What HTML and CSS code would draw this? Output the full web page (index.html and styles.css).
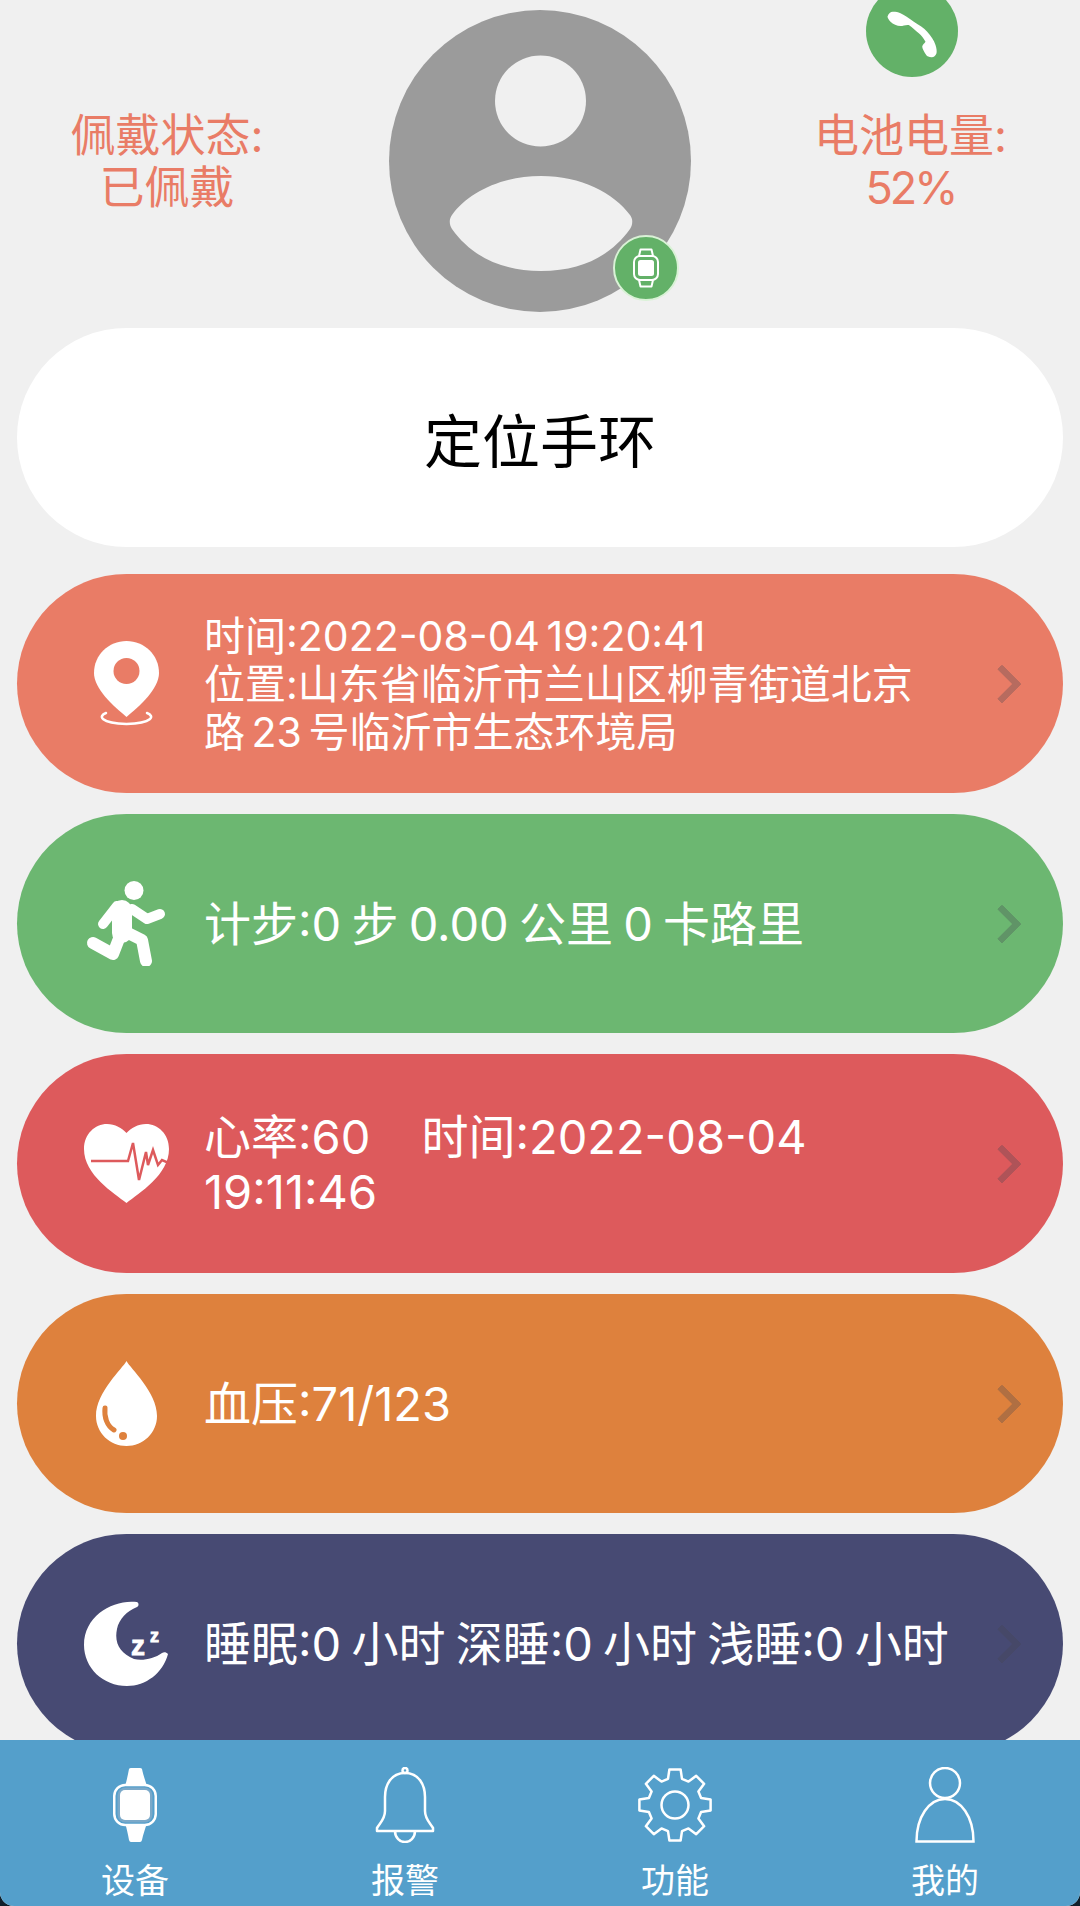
FILE: index.html
```html
<!DOCTYPE html>
<html lang="zh-CN">
<head>
    <meta charset="utf-8">
    <title>设备</title>
    <link rel="stylesheet" href="styles.css">
</head>
<body>
    <div class="page">
        <main class="main">
            <div class="header">
                <div class="status">佩戴状态:<br>已佩戴</div>
                <div class="avatar">
                    <svg class="avatar-img" viewBox="0 0 302 302">
                        <circle cx="151" cy="151" r="151" fill="#9b9b9b"/>
                        <circle cx="151.5" cy="91" r="45.5" fill="#f0f0f0"/>
                        <path d="M63 205 C79 183 112 166 152 166 C192 166 225 183 241 205 C244 209 244 214 241 219 C223 244 195 261 152 261 C109 261 81 244 63 219 C60 214 60 209 63 205Z" fill="#f0f0f0"/>
                    </svg>
                    <div class="badge">
                        <svg viewBox="0 0 62 62" width="62" height="62">
                            <path d="M24 19 L25.500 12.500 H36.500 L38 19 M24 43 L25.500 49.500 H36.500 L38 43" fill="none" stroke="#fff" stroke-width="2" stroke-linejoin="round"/>
                            <rect x="19" y="19" width="24" height="24" rx="6" fill="none" stroke="#fff" stroke-width="2"/>
                            <rect x="23" y="23" width="16" height="16" rx="2.500" fill="#fff"/>
                        </svg>
                    </div>
                </div>
                <div class="status status-right">电池电量:<br><span class="status-num">52%</span></div>
                <div class="call">
                    <svg viewBox="0 0 92 92" width="92" height="92">
                        <path d="M21.500 31.500 C22.500 28 25 26.500 27 26.700 C30 26.800 32 27 34.500 28.300 C39 30.500 43 33.500 47.800 36.700 C53 40 58 43 61.200 46.700 C65 51 68 55 69.500 60 C70.500 63 71 66 70.500 68.300 C69.500 71 67.500 72.500 65.500 72.300 C63 72 61 71.500 60.200 70 C58.500 67 56.500 64.500 56.200 61.700 C56.500 59.500 58.500 58.500 59.500 56.700 C57.500 53.500 55.500 50.500 52.800 48.300 C49 45 46 42 42.800 40 C40 39.500 37 41 34.500 41 C31 41 27 39 24.500 36.700 C23 35 21.500 33 21.500 31.500Z" fill="#fff"/>
                    </svg>
                </div>
            </div>

            <div class="locate">定位手环</div>

            <div class="list">
                <div class="card card-coral">
                    <svg class="card-icon" viewBox="0 0 85 85">
                        <path d="M22 72 C14 75 16 82 42.500 83 C69 82 71 75 63 72" fill="none" stroke="#fff" stroke-width="2.500" stroke-linecap="round"/>
                        <path d="M42.500 0 C60.500 0 75 14 75 32 C75 48 55.500 65 42.500 76 C29.500 65 10 48 10 32 C10 14 24.500 0 42.500 0Z" fill="#fff"/>
                        <circle cx="42.500" cy="30" r="13" fill="#e97c66"/>
                    </svg>
                    <div class="card-text">时间:2022-08-04 19:20:41<br>位置:山东省临沂市兰山区柳青街道北京路 23 号临沂市生态环境局</div>
                    <span class="chevron"></span>
                </div>

                <div class="card card-green">
                    <svg class="card-icon" viewBox="0 0 85 85">
                        <g fill="none" stroke="#fff" stroke-linecap="round" stroke-linejoin="round">
                            <circle cx="50" cy="9.500" r="9.500" fill="#fff" stroke="none"/>
                            <path d="M38 29 L38 52" stroke-width="20"/>
                            <path d="M33 25 L19 43" stroke-width="10"/>
                            <path d="M48 28 L63 38 L76 33" stroke-width="10"/>
                            <path d="M36 55 L29 73 L9 62" stroke-width="12"/>
                            <path d="M44 52 L58 59 L62 80" stroke-width="12"/>
                        </g>
                    </svg>
                    <div class="card-text">计步:0 步 0.00 公里 0 卡路里</div>
                    <span class="chevron"></span>
                </div>

                <div class="card card-red">
                    <svg class="card-icon" viewBox="0 0 85 85">
                        <path d="M42.500 82 C30 72 0 54 0 28 C0 13 11 3 23 3 C31 3 38 7 42.500 12 C47 7 54 3 62 3 C74 3 85 13 85 28 C85 54 55 72 42.500 82Z" fill="#fff"/>
                        <path d="M7 40 H44 L49 22 L55 59 L62 31 L64 44 L69 29 L74 44 L78 39 L85 42" fill="none" stroke="#dd5a5c" stroke-width="2.500"/>
                    </svg>
                    <div class="card-text">心率:60&nbsp;&nbsp;&nbsp;&nbsp;&nbsp;时间:2022-08-04 19:11:46</div>
                    <span class="chevron"></span>
                </div>

                <div class="card card-orange">
                    <svg class="card-icon" viewBox="0 0 85 85">
                        <path d="M42.500 0 C46 7 73 31 73 55 C73 72 59 85 42.500 85 C26 85 12 72 12 55 C12 31 39 7 42.500 0Z" fill="#fff"/>
                        <path d="M21 47 C20 56 23 65 30 69" fill="none" stroke="#de813d" stroke-width="5" stroke-linecap="round"/>
                        <circle cx="39" cy="75" r="4" fill="#de813d"/>
                    </svg>
                    <div class="card-text">血压:71/123</div>
                    <span class="chevron"></span>
                </div>

                <div class="card card-navy">
                    <svg class="card-icon" viewBox="0 0 85 85">
                        <path d="M53 1 C30 -2 0 14 0 44 C0 67 19 85 43 85 C62 85 79 72 84 53 C82 51 80 51 78 52 C70 58 58 60 50 58 C36 52 30 42 33 28 C35 18 43 10 53 6 C55 5 55 2 53 1Z" fill="#fff"/>
                        <text class="snore" x="47" y="54" font-size="28">z</text>
                        <text class="snore" x="66" y="41" font-size="18">z</text>
                    </svg>
                    <div class="card-text">睡眠:0 小时 深睡:0 小时 浅睡:0 小时</div>
                    <span class="chevron"></span>
                </div>
            </div>
        </main>

        <nav class="tabbar">
            <div class="tab">
                <svg class="tab-icon" viewBox="0 0 60 76">
                    <path d="M20 19 C22 13 23 7 24 2 Q24.500 1 26 1 H35 Q36.500 1 37 2 C38 7 40 13 42 19Z M20 56 C22 62 23 68 24 73 Q24.500 75 26 75 H35 Q36.500 75 37 73 C38 68 40 62 42 56Z" fill="#fff"/>
                    <rect x="9.250" y="18" width="41.500" height="40" rx="11" fill="#549fcb" stroke="#fff" stroke-width="2.500"/>
                    <rect x="12.500" y="20.500" width="35" height="35" rx="8" fill="#7ba9c9"/>
                    <rect x="15" y="23" width="30" height="30" rx="5" fill="#fff"/>
                </svg>
                <span>设备</span>
            </div>
            <div class="tab">
                <svg class="tab-icon" viewBox="0 0 60 76">
                    <g fill="none" stroke="#fff" stroke-width="2.500" stroke-linejoin="round">
                        <circle cx="30" cy="3.500" r="2.500"/>
                        <path d="M30 6 C16 6 10 18 10 30 L10 44 C10 52 5 56 2 61 L2 64 H58 L58 61 C55 56 50 52 50 44 L50 30 C50 18 44 6 30 6Z"/>
                        <path d="M20 64 C20 71 25 75 30 75 C35 75 40 71 40 64"/>
                    </g>
                </svg>
                <span>报警</span>
            </div>
            <div class="tab">
                <svg class="tab-icon" viewBox="0 0 76 76">
                    <g fill="none" stroke="#fff" stroke-width="2.500" stroke-linejoin="round" transform="translate(38 38)">
                        <polygon points="-7,-26.100 -5.600,-35.600 5.600,-35.600 7,-26.100 13.510,-23.410 21.210,-29.130 29.130,-21.210 23.410,-13.510 26.100,-7 35.600,-5.600 35.600,5.600 26.100,7 23.410,13.510 29.130,21.210 21.210,29.130 13.510,23.410 7,26.100 5.600,35.600 -5.600,35.600 -7,26.100 -13.510,23.410 -21.210,29.130 -29.130,21.210 -23.410,13.510 -26.100,7 -35.600,5.600 -35.600,-5.600 -26.100,-7 -23.410,-13.510 -29.130,-21.210 -21.210,-29.130 -13.510,-23.410"/>
                        <circle r="13.500"/>
                    </g>
                </svg>
                <span>功能</span>
            </div>
            <div class="tab">
                <svg class="tab-icon" viewBox="0 0 60 76">
                    <g fill="none" stroke="#fff" stroke-width="2.500">
                        <circle cx="30" cy="16" r="15"/>
                        <path d="M1.500 74.500 C1.500 50 14 32 30 32 C46 32 58.500 50 58.500 74.500Z"/>
                    </g>
                </svg>
                <span>我的</span>
            </div>
        </nav>
    </div>
</body>
</html>
```

FILE: styles.css
```css
body {
    margin: 0;
    background: #10202c;
    font-family: Inter, "Noto Sans CJK SC", sans-serif;
    overflow: hidden;
}

.page {
    display: flex;
    flex-direction: column;
    height: 1906px;
    border-radius: 0 0 14px 14px;
    background: #f0f0f0;
    overflow: hidden;
}

.main {
    position: relative;
    height: 1740px;
    overflow: hidden;
    padding: 0 17px;
}

.header {
    display: grid;
    grid-template-columns: 334px 1fr 334px;
    align-items: center;
    height: 328px;
    margin: 0 -17px;
    padding-bottom: 5px;
    box-sizing: border-box;
}

.status {
    font-size: 45px;
    line-height: 52px;
    text-align: center;
    color: #e97c66;
}

.status-right {
    padding-right: 5px;
}

.status-num {
    letter-spacing: -3px;
}

.avatar {
    position: relative;
    width: 302px;
    height: 302px;
    justify-self: center;
    margin-top: -2px;
}

.avatar-img {
    display: block;
    width: 302px;
    height: 302px;
}

.badge {
    position: absolute;
    left: 224px;
    top: 225px;
    width: 62px;
    height: 62px;
    border: 2px solid #d9f2d6;
    border-radius: 50%;
    background: #63b168;
}

.badge svg {
    display: block;
}

.call {
    position: absolute;
    right: 122px;
    top: -15px;
    width: 92px;
    height: 92px;
    border-radius: 50%;
    background: #63b168;
}

.call svg {
    display: block;
}

.locate {
    display: flex;
    align-items: center;
    justify-content: center;
    height: 219px;
    margin-bottom: 27px;
    border-radius: 110px;
    background: #fff;
    color: #000;
    font-size: 58px;
}

.list {
    display: flex;
    flex-direction: column;
    gap: 21px;
}

.card {
    display: flex;
    align-items: center;
    flex-shrink: 0;
    height: 219px;
    padding: 0 47px 0 67px;
    border-radius: 110px;
    color: #fff;
    box-sizing: border-box;
}

.card-coral { background: #e97c66; }
.card-green { background: #6cb771; }
.card-red { background: #dd5a5c; }
.card-orange { background: #de813d; }
.card-navy { background: #474a73; }

.card-icon {
    flex-shrink: 0;
    width: 85px;
    height: 85px;
    margin-right: 35px;
}

.snore {
    fill: #fff;
    stroke: #fff;
    stroke-width: 0.8;
    font-family: "Liberation Sans", sans-serif;
    font-weight: bold;
}

.card-text {
    flex: 1;
    font-size: 47px;
    line-height: 55px;
    word-spacing: -3px;
}

.card-coral .card-text {
    max-width: 730px;
    margin-right: 20px;
    font-size: 41px;
    line-height: 48px;
    word-spacing: -5px;
}

.chevron {
    flex-shrink: 0;
    width: 28px;
    height: 28px;
    margin-left: 34px;
    border-top: 7px solid rgba(70, 70, 80, 0.3);
    border-right: 7px solid rgba(70, 70, 80, 0.3);
    border-radius: 2px;
    box-sizing: border-box;
    transform: rotate(45deg);
}

.tabbar {
    display: grid;
    grid-template-columns: repeat(4, 1fr);
    height: 166px;
    background: #549fcb;
}

.tab {
    display: flex;
    flex-direction: column;
    align-items: center;
    padding-top: 27px;
    color: #fff;
    font-size: 34px;
    line-height: 40px;
}

.tab-icon {
    display: block;
    height: 76px;
    margin-bottom: 18px;
}
```
